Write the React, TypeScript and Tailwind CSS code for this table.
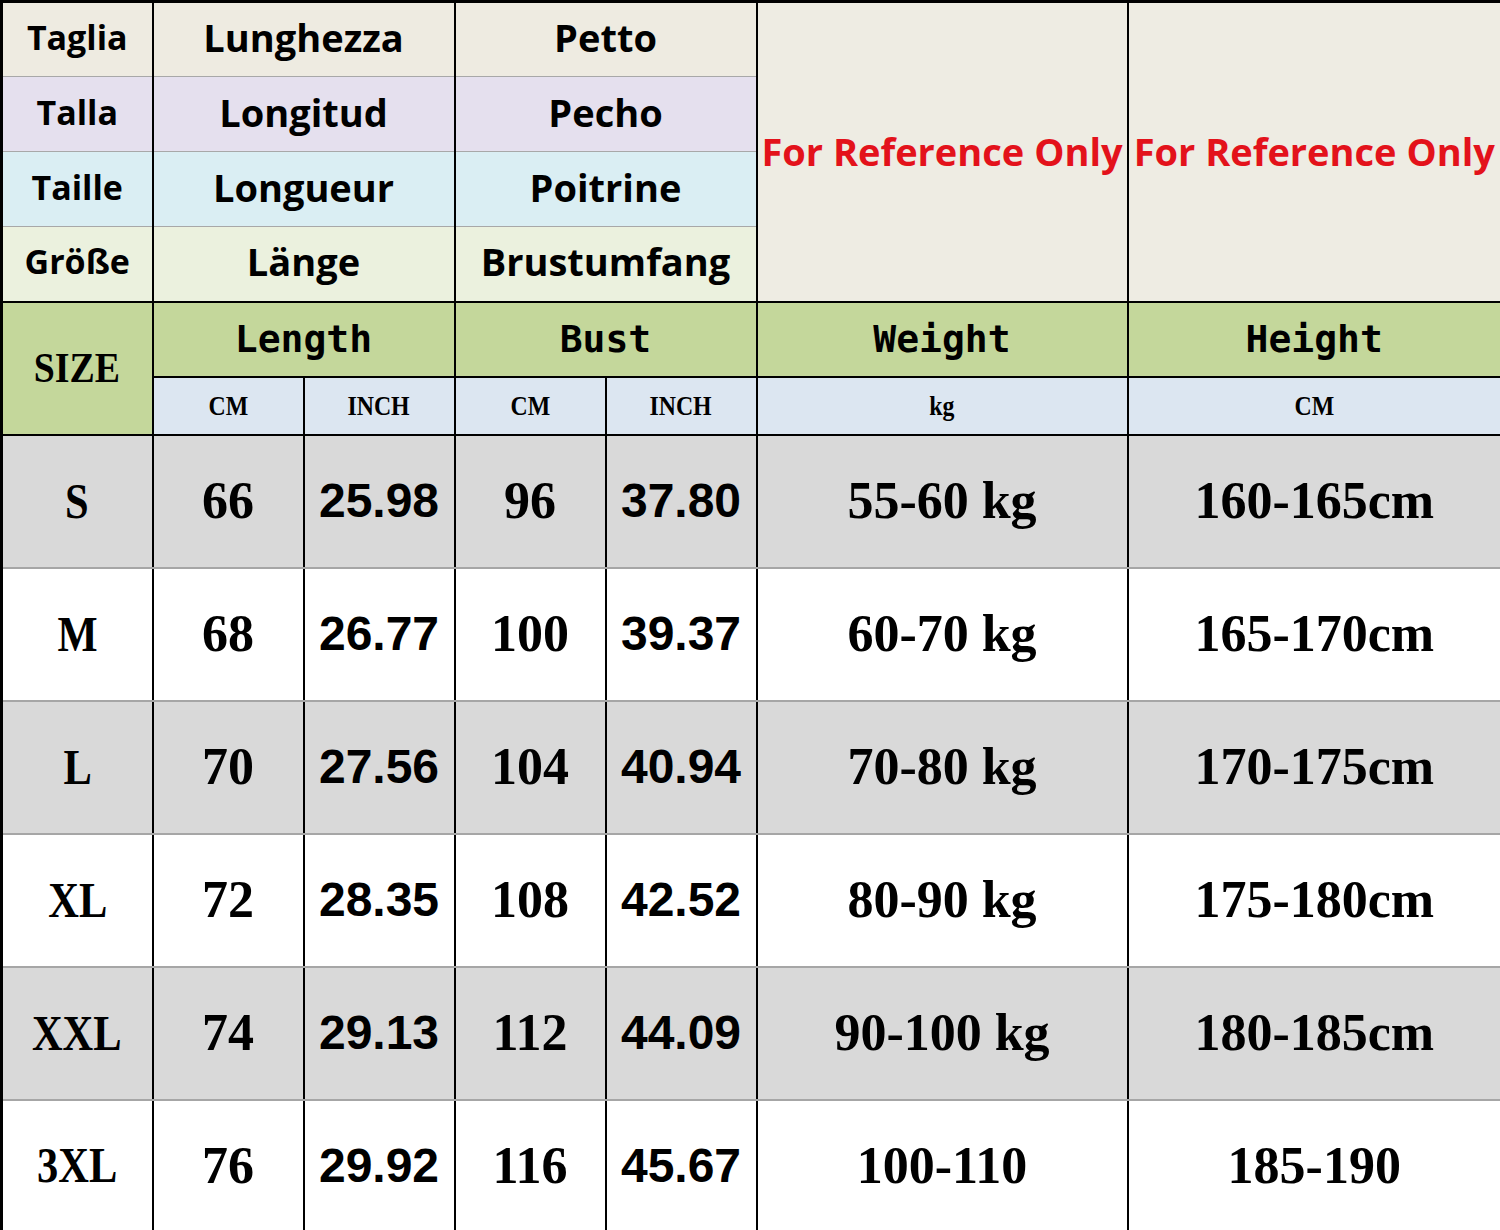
import React from 'react';

const headSans = "font-['Open_Sans','Noto_Sans',sans-serif] font-bold";
const serif = "font-['Liberation_Serif',serif] font-bold";
const narrow = "font-['Liberation_Sans_Narrow','Liberation_Sans',sans-serif] font-bold";
const mono = "font-['DejaVu_Sans_Mono','Liberation_Mono',monospace] font-bold";

const langRows = [
  { bg: 'bg-[#eeebe1]', size: 'Taglia', len: 'Lunghezza', bust: 'Petto' },
  { bg: 'bg-[#e5e0ee]', size: 'Talla', len: 'Longitud', bust: 'Pecho' },
  { bg: 'bg-[#daeef3]', size: 'Taille', len: 'Longueur', bust: 'Poitrine' },
  { bg: 'bg-[#ebf1de]', size: 'Größe', len: 'Länge', bust: 'Brustumfang' },
];

const sizes = [
  { size: 'S', lc: '66', li: '25.98', bc: '96', bi: '37.80', w: '55-60 kg', h: '160-165cm' },
  { size: 'M', lc: '68', li: '26.77', bc: '100', bi: '39.37', w: '60-70 kg', h: '165-170cm' },
  { size: 'L', lc: '70', li: '27.56', bc: '104', bi: '40.94', w: '70-80 kg', h: '170-175cm' },
  { size: 'XL', lc: '72', li: '28.35', bc: '108', bi: '42.52', w: '80-90 kg', h: '175-180cm' },
  { size: 'XXL', lc: '74', li: '29.13', bc: '112', bi: '44.09', w: '90-100 kg', h: '180-185cm' },
  { size: '3XL', lc: '76', li: '29.92', bc: '116', bi: '45.67', w: '100-110', h: '185-190' },
];

export default function App() {
  return (
    <div className="w-[1500px] h-[1230px] bg-white">
      <table className="w-[1500px] table-fixed border-collapse border-[3px] border-black text-black text-center">
        <colgroup>
          <col className="w-[151px]" />
          <col className="w-[151px]" />
          <col className="w-[151px]" />
          <col className="w-[151px]" />
          <col className="w-[151px]" />
          <col className="w-[371px]" />
          <col className="w-[374px]" />
        </colgroup>
        <tbody>
          {/* Multilingual header */}
          {langRows.map((r, i) => (
            <tr key={r.size} className="h-[75px]">
              <td className={`${r.bg} border-x-2 border-x-black border-y border-y-[#a8a8a8] pb-[4px] text-[34px] ${headSans}`}>
                {r.size}
              </td>
              <td colSpan={2} className={`${r.bg} border-x-2 border-x-black border-y border-y-[#a8a8a8] pb-[4px] text-[38px] ${headSans}`}>
                {r.len}
              </td>
              <td colSpan={2} className={`${r.bg} border-x-2 border-x-black border-y border-y-[#a8a8a8] pb-[4px] text-[38px] ${headSans}`}>
                {r.bust}
              </td>
              {i === 0 && (
                <>
                  <td rowSpan={4} className={`bg-[#eeece3] border-2 border-black text-[38px] text-[#e3121b] whitespace-nowrap ${headSans}`}>
                    For Reference Only
                  </td>
                  <td rowSpan={4} className={`bg-[#eeece3] border-2 border-black text-[38px] text-[#e3121b] whitespace-nowrap ${headSans}`}>
                    For Reference Only
                  </td>
                </>
              )}
            </tr>
          ))}

          {/* English header */}
          <tr className="h-[75px]">
            <td rowSpan={2} className={`bg-[#c4d79b] border-2 border-black text-[42px] ${serif}`}>
              <span className="inline-block scale-x-[0.9]">SIZE</span>
            </td>
            <td colSpan={2} className={`bg-[#c4d79b] border-2 border-black text-[38px] ${mono}`}>Length</td>
            <td colSpan={2} className={`bg-[#c4d79b] border-2 border-black text-[38px] ${mono}`}>Bust</td>
            <td className={`bg-[#c4d79b] border-2 border-black text-[38px] ${mono}`}>Weight</td>
            <td className={`bg-[#c4d79b] border-2 border-black text-[38px] ${mono}`}>Height</td>
          </tr>
          <tr className="h-[58px]">
            {['CM', 'INCH', 'CM', 'INCH', 'kg', 'CM'].map((u, i) => (
              <td key={i} className={`bg-[#dce6f1] border-2 border-black text-[28px] ${serif}`}>
                <span className="inline-block scale-x-[0.85]">{u}</span>
              </td>
            ))}
          </tr>

          {/* Data */}
          {sizes.map((s, i) => {
            const bg = i % 2 === 0 ? 'bg-[#d9d9d9]' : 'bg-white';
            const cell = `${bg} border-x-2 border-x-black border-y-2 border-y-[#a6a6a6]`;
            return (
              <tr key={s.size} className="h-[133px]">
                <td className={`${cell} text-[50px] ${serif}`}>
                  <span className="inline-block scale-x-[0.85]">{s.size}</span>
                </td>
                <td className={`${cell} text-[52px] ${serif}`}>{s.lc}</td>
                <td className={`${cell} text-[48px] ${narrow}`}>{s.li}</td>
                <td className={`${cell} text-[52px] ${serif}`}>{s.bc}</td>
                <td className={`${cell} text-[48px] ${narrow}`}>{s.bi}</td>
                <td className={`${cell} text-[52px] ${serif}`}>{s.w}</td>
                <td className={`${cell} text-[52px] ${serif}`}>{s.h}</td>
              </tr>
            );
          })}
        </tbody>
      </table>
    </div>
  );
}
